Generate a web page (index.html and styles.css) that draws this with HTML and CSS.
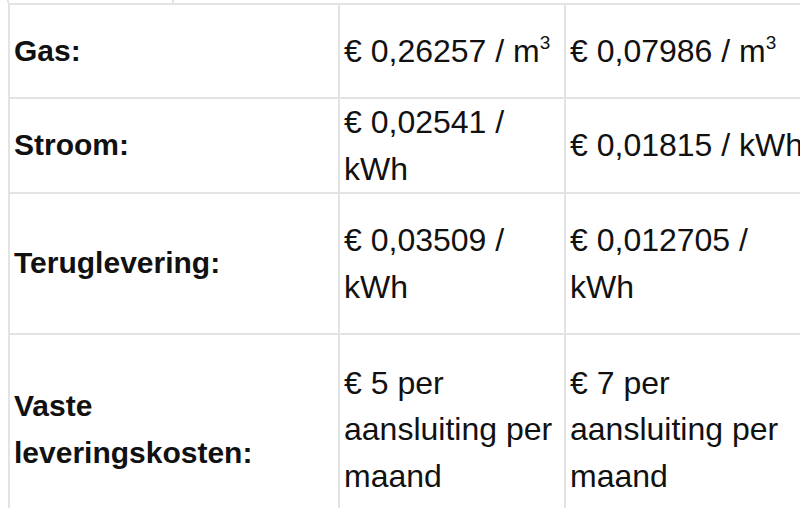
FILE: index.html
```html
<!DOCTYPE html>
<html lang="nl">
<head>
<meta charset="utf-8">
<title>Tarieven</title>
<link rel="stylesheet" href="styles.css">
</head>
<body>
<div class="prev">
  <span class="prev-cell prev-a"></span>
  <span class="prev-cell prev-b"></span>
</div>
<table class="rates">
  <colgroup>
    <col class="c-label">
    <col class="c-val1">
    <col class="c-val2">
  </colgroup>
  <tbody>
    <tr class="r-gas">
      <th>Gas:</th>
      <td>€ 0,26257 / m<sup>3</sup></td>
      <td>€ 0,07986 / m<sup>3</sup></td>
    </tr>
    <tr class="r-stroom">
      <th>Stroom:</th>
      <td>€ 0,02541 / kWh</td>
      <td>€ 0,01815 / kWh</td>
    </tr>
    <tr class="r-terug">
      <th>Teruglevering:</th>
      <td>€ 0,03509 / kWh</td>
      <td>€ 0,012705 / kWh</td>
    </tr>
    <tr class="r-vast">
      <th>Vaste leveringskosten:</th>
      <td>€ 5 per aansluiting per maand</td>
      <td>€ 7 per aansluiting per maand</td>
    </tr>
  </tbody>
</table>
</body>
</html>
```

FILE: styles.css
```css
html, body {
  margin: 0;
  padding: 0;
  background: #ffffff;
  overflow: hidden;
}

body {
  width: 800px;
  height: 508px;
  font-family: "Liberation Sans", Arial, sans-serif;
  color: #111111;
}

.prev {
  display: flex;
  height: 3px;
  padding-left: 7px;
}

.prev-cell {
  display: block;
  height: 3px;
  border-left: 2px solid #e3e3e3;
}

.prev-a {
  width: 163px;
}

.prev-b {
  width: 300px;
}

.rates {
  border-collapse: collapse;
  table-layout: fixed;
  width: 810px;
  margin-left: 8px;
}

.c-label { width: 330px; }
.c-val1 { width: 226px; }
.c-val2 { width: 254px; }

.rates th,
.rates td {
  border: 2px solid #e3e3e3;
  padding: 0 10px 0 4px;
  vertical-align: middle;
  text-align: left;
  line-height: 46.5px;
}

.rates th {
  font-weight: bold;
  font-size: 30px;
}

.rates td {
  font-weight: normal;
  font-size: 32px;
}

.rates sup {
  font-size: 19px;
  line-height: 0;
  vertical-align: 13px;
}

.r-gas { height: 94px; }
.r-stroom { height: 94px; }
.r-terug { height: 141px; }
.r-vast { height: 191px; }
```
